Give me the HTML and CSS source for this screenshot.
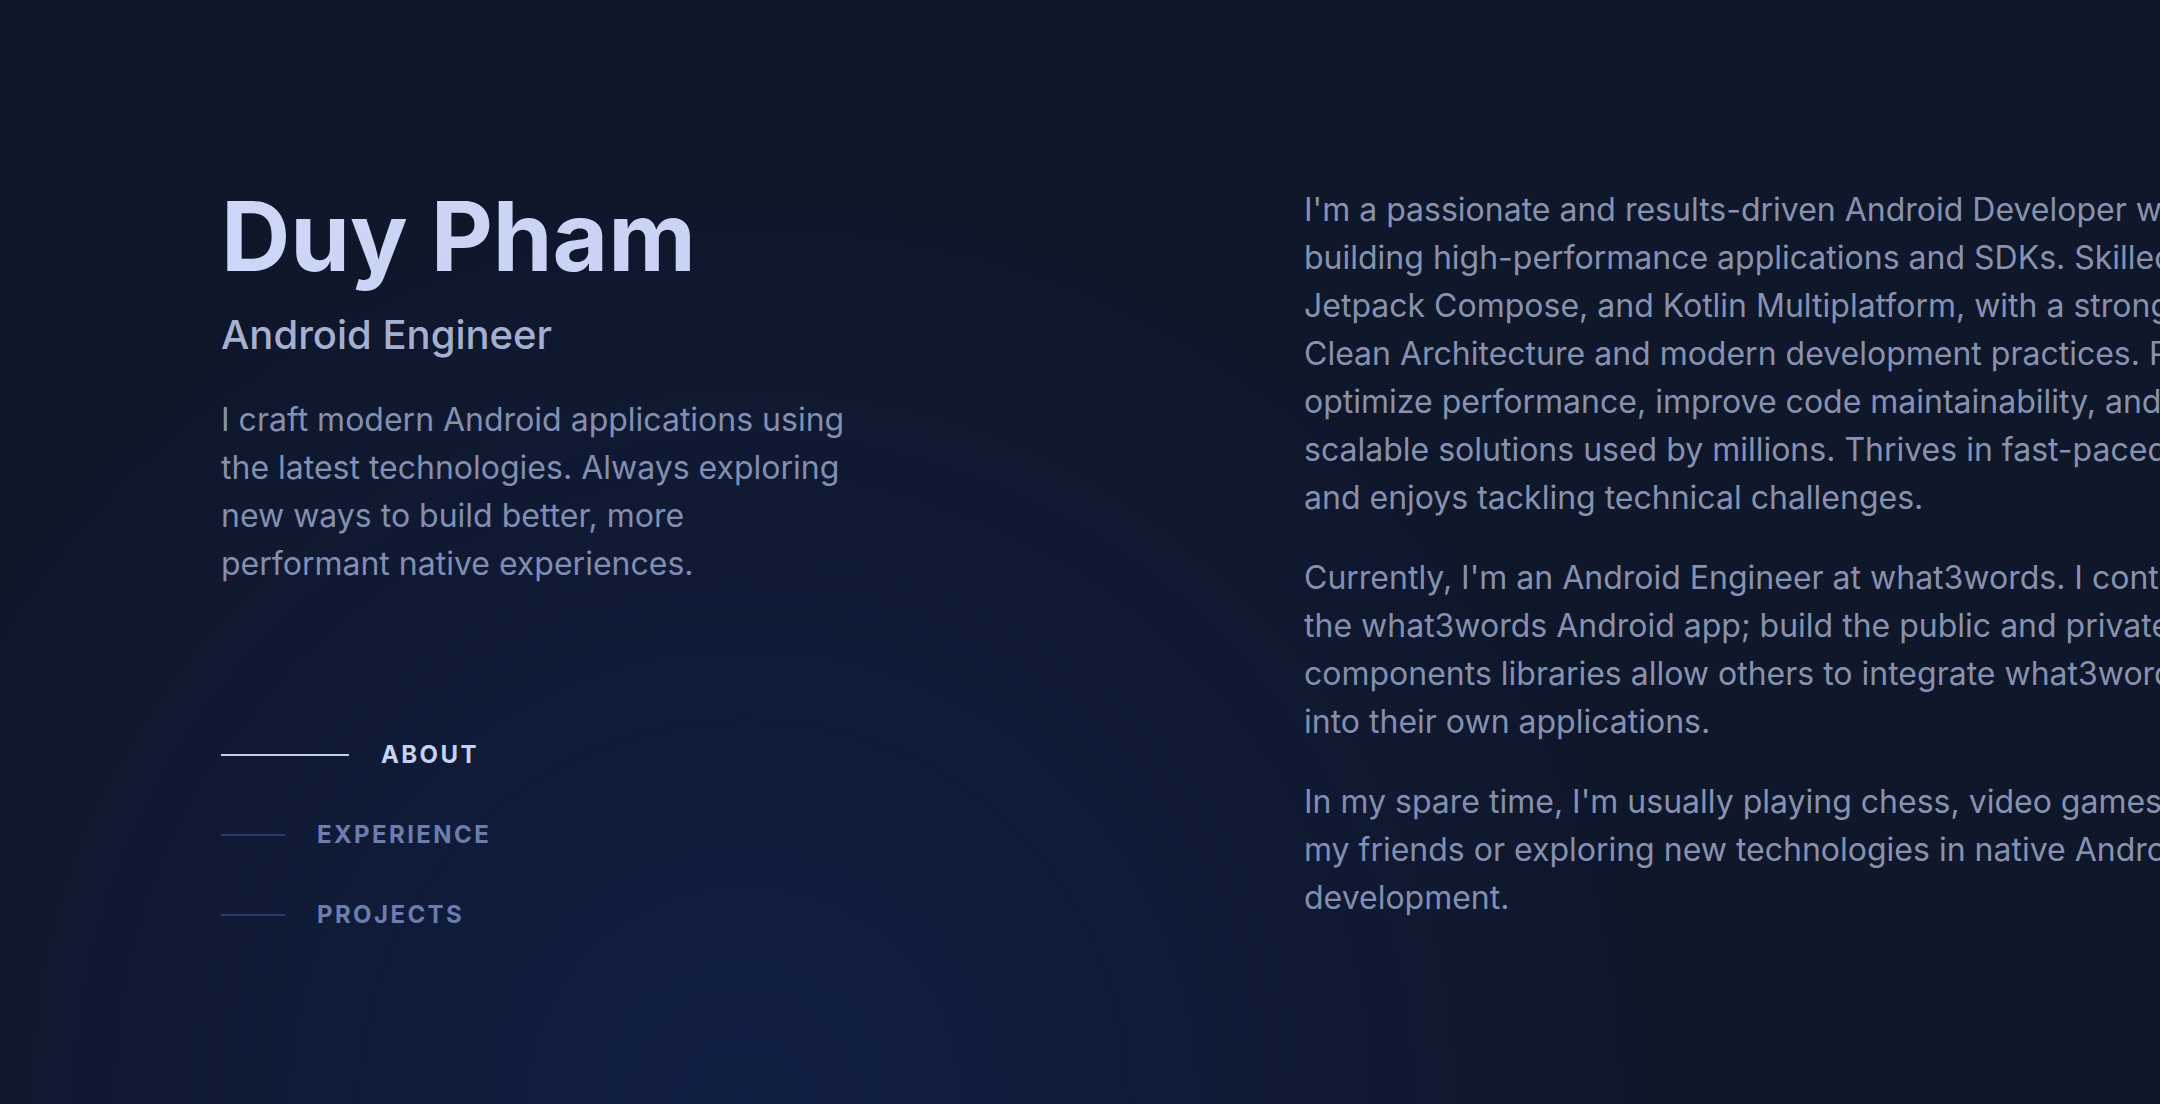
FILE: index.html
```html
<!DOCTYPE html>
<html lang="en">
<head>
<meta charset="utf-8">
<title>Duy Pham</title>
<link rel="stylesheet" href="styles.css">
</head>
<body>
<div class="spotlight"></div>
<div class="page">
  <header class="intro">
    <h1 class="name">Duy Pham</h1>
    <h2 class="role">Android Engineer</h2>
    <p class="tagline">I craft modern Android applications using the latest technologies. Always exploring new ways to build better, more performant native experiences.</p>
    <nav class="nav">
      <ul class="nav-list">
        <li><a class="nav-link active" href="#about"><span class="nav-indicator"></span><span class="nav-text">About</span></a></li>
        <li><a class="nav-link" href="#experience"><span class="nav-indicator"></span><span class="nav-text">Experience</span></a></li>
        <li><a class="nav-link" href="#projects"><span class="nav-indicator"></span><span class="nav-text">Projects</span></a></li>
      </ul>
    </nav>
  </header>
  <main class="content">
    <section class="about" id="about">
      <p>I'm a passionate and results-driven Android Developer with expertise in<br>
      building high-performance applications and SDKs. Skilled in Kotlin,<br>
      Jetpack Compose, and Kotlin Multiplatform, with a strong focus on<br>
      Clean Architecture and modern development practices. Proven ability to<br>
      optimize performance, improve code maintainability, and deliver<br>
      scalable solutions used by millions. Thrives in fast-paced environments<br>
      and enjoys tackling technical challenges.</p>
      <p>Currently, I'm an Android Engineer at what3words. I contribute to<br>
      the what3words Android app; build the public and private SDKs and UI<br>
      components libraries allow others to integrate what3words addresses<br>
      into their own applications.</p>
      <p>In my spare time, I'm usually playing chess, video games with<br>
      my friends or exploring new technologies in native Android app<br>
      development.</p>
    </section>
  </main>
</div>
</body>
</html>
```

FILE: styles.css
```css
html, body {
  margin: 0;
  padding: 0;
  overflow: hidden;
}

body {
  background: #0f172a;
  font-family: Inter, "Noto Sans", sans-serif;
  -webkit-font-smoothing: antialiased;
  min-height: 1104px;
  color: #8892b0;
}

.spotlight {
  position: fixed;
  inset: 0;
  pointer-events: none;
  background: radial-gradient(1200px circle at 744px 1104px, rgba(29, 78, 216, 0.15), transparent 80%);
}

.page {
  display: flex;
  padding-left: 221px;
  width: max-content;
}

.intro {
  flex: 0 0 1083px;
  padding-top: 188px;
}

.name {
  margin: 0;
  font-size: 96px;
  line-height: 1;
  font-weight: 700;
  color: #ccd6f6;
}

.role {
  margin: 23px 0 0;
  font-size: 40px;
  line-height: 56px;
  font-weight: 500;
  color: #a8b2d1;
}

.tagline {
  margin: 33px 0 0;
  max-width: 640px;
  font-size: 32px;
  line-height: 48px;
  color: #8892b0;
}

.nav-list {
  list-style: none;
  margin: 127px 0 0;
  padding: 0;
  width: max-content;
}

.nav-link {
  display: flex;
  align-items: center;
  padding: 24px 0;
  text-decoration: none;
}

.nav-indicator {
  display: block;
  width: 64px;
  height: 2px;
  margin-right: 32px;
  background: #2d3a5f;
}

.nav-text {
  font-size: 24px;
  line-height: 32px;
  font-weight: 700;
  letter-spacing: 0.1em;
  text-transform: uppercase;
  color: #7482ab;
}

.nav-link.active .nav-indicator {
  width: 128px;
  background: #ccd6f6;
}

.nav-link.active .nav-text {
  color: #d6ddf4;
}

.content {
  flex: 0 0 1300px;
  padding-top: 186px;
}

.about p {
  margin: 0 0 32px;
  font-size: 32px;
  line-height: 48px;
  color: #8892b0;
}
```
